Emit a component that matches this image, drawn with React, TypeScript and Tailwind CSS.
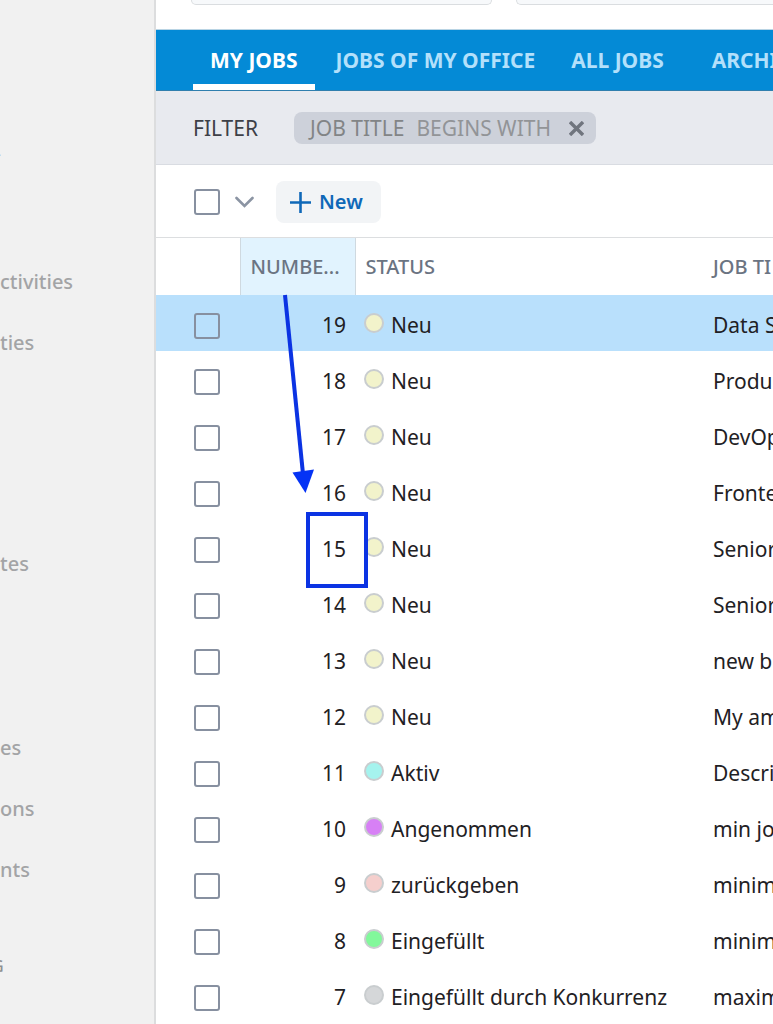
import React from "react";

const tabs = ["JOBS OF MY OFFICE", "ALL JOBS"];

const jobs = [
  { number: 19, status: "Neu", color: "bg-[#f2f3cb]", title: "Data S", selected: true },
  { number: 18, status: "Neu", color: "bg-[#f2f3cb]", title: "Produ" },
  { number: 17, status: "Neu", color: "bg-[#f2f3cb]", title: "DevOp" },
  { number: 16, status: "Neu", color: "bg-[#f2f3cb]", title: "Fronte" },
  { number: 15, status: "Neu", color: "bg-[#f2f3cb]", title: "Senior" },
  { number: 14, status: "Neu", color: "bg-[#f2f3cb]", title: "Senior" },
  { number: 13, status: "Neu", color: "bg-[#f2f3cb]", title: "new b" },
  { number: 12, status: "Neu", color: "bg-[#f2f3cb]", title: "My am" },
  { number: 11, status: "Aktiv", color: "bg-[#a5f3ee]", title: "Descri" },
  { number: 10, status: "Angenommen", color: "bg-[#d780f5]", title: "min jo" },
  { number: 9, status: "zurückgeben", color: "bg-[#f5cfcd]", title: "minim" },
  { number: 8, status: "Eingefüllt", color: "bg-[#82f89b]", title: "minim" },
  { number: 7, status: "Eingefüllt durch Konkurrenz", color: "bg-[#d5d7d9]", title: "maxim" },
];

function Checkbox({ label }: { label: string }) {
  return (
    <input
      type="checkbox"
      aria-label={label}
      className="block size-[26px] shrink-0 appearance-none rounded-[3px] border-2 border-[#8790a0] checked:bg-[#0470c4]"
    />
  );
}

function NavItem({ children }: { children: React.ReactNode }) {
  return (
    <a href="#" className="flex h-[61px] items-center text-xl font-medium text-[#a3a4a6]">
      {children}
    </a>
  );
}

function NavHeading({ children }: { children: React.ReactNode }) {
  return <h2 className="-ml-2 h-6 text-base leading-6 font-medium text-[#8f9092]">{children}</h2>;
}

function Sidebar() {
  return (
    <nav className="w-[156px] shrink-0 overflow-hidden border-r-2 border-[#dcddde] bg-[#f1f1f1] pt-[138px]">
      <NavHeading>L</NavHeading>
      <div className="mt-[89px]">
        <NavItem>ctivities</NavItem>
        <NavItem>ties</NavItem>
      </div>
      <div className="mt-40">
        <NavItem>tes</NavItem>
      </div>
      <div className="mt-[123px]">
        <NavItem>es</NavItem>
        <NavItem>ons</NavItem>
        <NavItem>nts</NavItem>
      </div>
      <div className="mt-[54px]">
        <NavHeading>G</NavHeading>
      </div>
    </nav>
  );
}

export default function App() {
  return (
    <div className="flex h-screen overflow-hidden bg-white font-['Noto_Sans',sans-serif] text-[21px] text-[#1f2124]">
      <Sidebar />

      <main className="relative min-w-0 flex-1 overflow-hidden">
        {/* Bottom edge of the cards above the tabs */}
        <div className="flex h-[30px] items-start gap-6 border-b border-[#b9d4e4] pl-[35px]">
          <div className="h-[5px] w-[301px] shrink-0 rounded-b-lg border border-t-0 border-[#dadde0] bg-[#f7f9fb]" />
          <div className="h-[5px] flex-1 rounded-bl-lg border-b border-l border-[#dadde0] bg-[#f7f9fb]" />
        </div>

        {/* Tabs */}
        <div className="flex h-[61px] border-b border-[#2f7fae] bg-[#048ad6] pl-[37px] font-bold whitespace-nowrap text-[#b3e0fb]">
          <button className="mr-[3px] border-b-[6px] border-white px-[17px] pt-2 text-white">MY JOBS</button>
          {tabs.map((tab) => (
            <button key={tab} className="px-[18px] pt-[2px]">
              {tab}
            </button>
          ))}
          <button className="ml-3 px-[18px] pt-[2px]">ARCHI</button>
        </div>

        {/* Filter */}
        <div className="flex h-[74px] items-center border-b border-[#d9dce2] bg-[#e8eaef] pl-[37px]">
          <span className="pt-[2px] text-[#3d4047]">FILTER</span>
          <div className="ml-9 flex h-8 items-center rounded-lg bg-[#cdd1da] pt-[2px] pr-3 pl-4 text-[#828486]">
            <span>JOB TITLE</span>
            <span className="ml-3 text-[#929497]">BEGINS WITH</span>
            <button aria-label="Remove filter" className="ml-[18px] text-[#70757e]">
              <svg width="15" height="15" viewBox="0 0 15 15" stroke="currentColor" strokeWidth="3.4">
                <path d="M1 1L14 14M14 1L1 14" />
              </svg>
            </button>
          </div>
        </div>

        {/* Toolbar */}
        <div className="flex h-[73px] items-center border-b border-[#dcdee0] pt-[2px] pl-[38px]">
          <Checkbox label="Select all jobs" />
          <button aria-label="Selection options" className="ml-[15px] text-[#8b94a3]">
            <svg width="19" height="12" viewBox="0 0 19 12" fill="none" stroke="currentColor" strokeWidth="2.6" strokeLinecap="round">
              <path d="M1.5 2L9.5 10L17.5 2" />
            </svg>
          </button>
          <button className="ml-[22px] flex h-[42px] items-center gap-2 rounded-lg bg-[#f2f4f6] pr-[18px] pl-[14px] text-xl font-semibold text-[#0f68b8]">
            <svg width="21" height="21" viewBox="0 0 21 21" stroke="currentColor" strokeWidth="2.6">
              <path d="M10.5 0V21M0 10.5H21" />
            </svg>
            New
          </button>
        </div>

        {/* Jobs */}
        <table className="w-full table-fixed border-collapse text-left whitespace-nowrap">
          <thead>
            <tr className="h-[57px] text-xl text-[#6b7482]">
              <th className="w-[84px]" aria-label="Select" />
              <th className="w-[115px] border-x border-[#cfd9e0] bg-[#e1f3fe] px-[10px] font-medium">NUMBE...</th>
              <th className="w-[348px] pl-[10px] font-medium">STATUS</th>
              <th className="overflow-hidden pl-[10px] font-medium">JOB TI</th>
            </tr>
          </thead>
          <tbody>
            {jobs.map((job) => (
              <tr key={job.number} className={job.selected ? "h-14 bg-[#b9e0fc]" : "h-14"}>
                <td className="pt-[6px] pl-[38px]">
                  <Checkbox label={`Select job ${job.number}`} />
                </td>
                <td className="pt-[6px] pr-[9px] text-right">{job.number}</td>
                <td className="pt-[6px] pl-[9px]">
                  <div className="flex items-center gap-[7px]">
                    <span className={`mb-[6px] size-5 rounded-full border-2 border-[#c9cdcf] ${job.color}`} />
                    {job.status}
                  </div>
                </td>
                <td className="overflow-hidden pt-[6px] pl-[10px]">{job.title}</td>
              </tr>
            ))}
          </tbody>
        </table>

        {/* Arrow and frame pointing out job 15 */}
        <svg className="pointer-events-none absolute top-[294px] left-[120px]" width="96" height="300" viewBox="0 0 96 300">
          <path d="M9 1L27 180" stroke="#0b33e3" strokeWidth="4" />
          <path d="M16.500 178.500L38 175.500L29.500 199Z" fill="#0533f5" />
          <rect x="32" y="220" width="58" height="72" fill="none" stroke="#0b33e3" strokeWidth="4" />
        </svg>
      </main>
    </div>
  );
}
